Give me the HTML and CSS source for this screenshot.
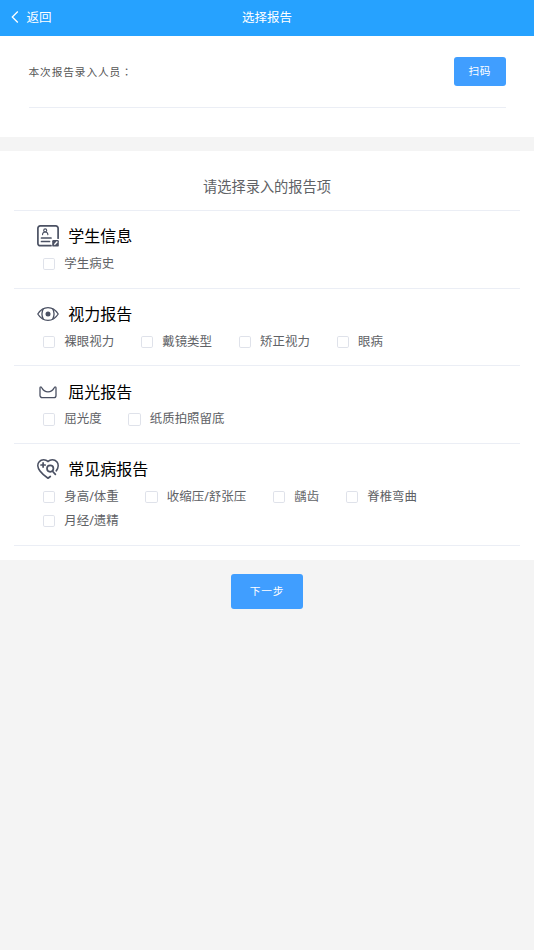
FILE: index.html
```html
<!DOCTYPE html>
<html lang="zh-CN">
<head>
<meta charset="utf-8">
<meta name="viewport" content="width=device-width, initial-scale=1">
<title>选择报告</title>
<link rel="stylesheet" href="styles.css">
</head>
<body>
<header class="nav">
  <a class="back"><svg class="chevron" viewBox="0 0 8 12"><path d="M6.800.5 1.300 6l5.500 5.500"/></svg>返回</a>
  <h1 class="nav-title">选择报告</h1>
  <span></span>
</header>
<section class="person">
  <div class="person-row">
    <span class="person-label">本次报告录入人员<span class="colon" lang="zh-TW">：</span></span>
    <button class="btn scan">扫码</button>
  </div>
</section>
<main class="reports">
  <h2 class="title">请选择录入的报告项</h2>
  <section class="group">
    <h3 class="heading">
      <svg class="icon" viewBox="0 0 22 22"><path d="M14 20.700H3.200a2.300 2.300 0 0 1-2.300-2.300V3.200A2.300 2.300 0 0 1 3.200.9h15.600a2.300 2.300 0 0 1 2.300 2.300v10M4.500 13h9.500M4.500 16.500h8"/><path class="thin" d="M5.500 9.600q.2-2.600 2.700-2.600t2.700 2.600"/><circle class="thin" cx="8.200" cy="5.400" r="1.500"/><rect class="solid" x="15.200" y="15" width="6.600" height="6.600" rx="1.200"/><path class="pen" d="m17 20.200.3-1.500 2.600-2.600 1 1-2.600 2.600z"/></svg>
      学生信息</h3>
    <div class="items"><label class="item"><i class="box"></i>学生病史</label></div>
  </section>
  <section class="group">
    <h3 class="heading">
      <svg class="icon" viewBox="0 0 22 22"><path class="mid" d="M.8 11C3.400 6.700 6.900 4.600 11 4.600S18.600 6.700 21.200 11C18.600 15.300 15.100 17.400 11 17.400S3.400 15.300.8 11z"/><path class="mid" d="M6.300 5.800Q3.600 11 6.300 16.200M15.700 5.800Q18.400 11 15.700 16.200"/><circle class="solid" cx="11" cy="11" r="2.500"/></svg>
      视力报告</h3>
    <div class="items"><label class="item"><i class="box"></i>裸眼视力</label><label class="item"><i class="box"></i>戴镜类型</label><label class="item"><i class="box"></i>矫正视力</label><label class="item"><i class="box"></i>眼病</label></div>
  </section>
  <section class="group">
    <h3 class="heading">
      <svg class="icon" viewBox="0 0 22 22"><path class="mid" d="M3.500 5.900Q3 5.900 3 6.900v7.600a2.200 2.200 0 0 0 2.200 2.200h11.600a2.200 2.200 0 0 0 2.200-2.200V6.900Q19 5.900 18.500 5.900 17.600 5.700 17 7.100 15 10.800 11 10.800T5 7.100Q4.400 5.700 3.500 5.900z"/></svg>
      屈光报告</h3>
    <div class="items"><label class="item"><i class="box"></i>屈光度</label><label class="item"><i class="box"></i>纸质拍照留底</label></div>
  </section>
  <section class="group">
    <h3 class="heading">
      <svg class="icon" viewBox="0 0 22 22"><path d="M13.300 18.500 11 20.200Q6 17 3 13C.5 9.800.2 6 2.200 3.800 4.600 1 8.600 1.200 11 3.500 13.400 1.200 17.400 1 19.800 3.800 21.700 6 21.500 9.800 19.300 12.800M4 7h4.200M6.100 4.900v4.200"/><circle cx="13.200" cy="10.600" r="3.200"/><path d="m15.500 13.200 2.900 3.200"/></svg>
      常见病报告</h3>
    <div class="items"><label class="item"><i class="box"></i>身高/体重</label><label class="item"><i class="box"></i>收缩压/舒张压</label><label class="item"><i class="box"></i>龋齿</label><label class="item"><i class="box"></i>脊椎弯曲</label><label class="item"><i class="box"></i>月经/遗精</label></div>
  </section>
</main>
<footer class="actions"><button class="btn next">下一步</button></footer>
</body>
</html>
```

FILE: styles.css
```css
* { box-sizing: border-box; }
body {
  margin: 0;
  min-height: 950px;
  background: #f4f4f4;
  color: #606266;
  font-family: "Noto Sans", "Noto Sans CJK SC", sans-serif;
}
h1, h2, h3 { margin: 0; font-weight: 400; }
.nav {
  display: grid;
  grid-template-columns: 1fr auto 1fr;
  align-items: center;
  height: 35.600px;
  padding: 0 11px;
  background: #26a2ff;
  color: #fff;
  font-size: 12.500px;
  line-height: 18px;
}
.back { display: flex; align-items: center; gap: 7.500px; }
.chevron { width: 8px; height: 12px; margin-top: -1px; fill: none; stroke: #fff; stroke-width: 1.300; }
.nav-title { font-size: 12.500px; }
.person { height: 101.400px; padding: 0 28.500px; background: #fff; }
.person-row {
  display: flex;
  justify-content: space-between;
  align-items: flex-start;
  height: 72.800px;
  padding-top: 21.300px;
  border-bottom: 1px solid #ebeef5;
}
.person-label { font-size: 10.700px; letter-spacing: .89px; line-height: 30px; color: #555; }
.colon { font-family: "Noto Sans CJK TC", sans-serif; }
.btn {
  padding: 0 0 1px;
  border: 0;
  border-radius: 3px;
  background: #409eff;
  color: #fff;
  font-family: inherit;
  font-size: 10.700px;
}
.scan { width: 51.500px; height: 29.500px; padding-bottom: 2px; letter-spacing: .5px; }
.reports { margin-top: 14.400px; padding: 0 14.200px 14px; background: #fff; }
.title {
  height: 59.700px;
  padding-top: 24px;
  border-bottom: 1px solid #ebeef5;
  font-size: 14.220px;
  line-height: 24px;
  text-align: center;
}
.group { min-height: 77.400px; padding: 13.400px 14.200px 11.300px 23px; border-bottom: 1px solid #ebeef5; }
.heading { display: flex; align-items: center; gap: 9px; height: 24px; color: #000; font-size: 16px; line-height: 24px; }
.icon { width: 22px; height: 22px; fill: none; stroke: #4b5163; stroke-width: 1.700; stroke-linecap: round; stroke-linejoin: round; }
.thin { stroke-width: 1.100; }
.mid { stroke-width: 1.300; }
.solid { fill: #4b5163; stroke: none; }
.pen { fill: #fff; stroke: none; }
.items { display: flex; flex-wrap: wrap; column-gap: 26.700px; padding: 3.700px 0 0 5.700px; }
.item { display: flex; align-items: center; gap: 9px; height: 24.200px; font-size: 12.440px; line-height: 24px; }
.box { width: 12.440px; height: 12.440px; border: 1px solid #dfe2ea; border-radius: 1.800px; background: #fff; }
.actions { display: flex; justify-content: center; padding-top: 14.200px; }
.next { width: 72px; height: 35.600px; letter-spacing: .89px; }
```
